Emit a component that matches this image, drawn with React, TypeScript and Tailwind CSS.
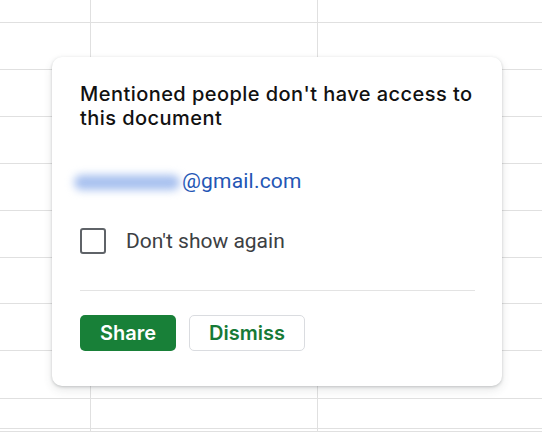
import React from "react";

const rowHeights = [23, 47, 47, 47, 47, 47, 46, 47, 48, 30, 3];

export default function App() {
  return (
    <div className="relative w-[542px] h-[432px] overflow-hidden bg-white" style={{ fontFamily: "Roboto, 'Liberation Sans', sans-serif" }}>
      {/* spreadsheet background */}
      <div className="flex flex-col">
        {rowHeights.map((h, i) => (
          <div key={i} className="flex border-b border-[#e0e0e0]" style={{ height: h }}>
            <div className="w-[91px] shrink-0 border-r border-[#e0e0e0]" />
            <div className="w-[227px] shrink-0 border-r border-[#e0e0e0]" />
            <div className="flex-1" />
          </div>
        ))}
      </div>

      {/* popup card */}
      <div className="absolute left-[52px] top-[57px] w-[450px] h-[329px] rounded-[10px] bg-white shadow-[0_1px_3px_rgba(60,64,67,0.25),0_4px_10px_rgba(60,64,67,0.12)] pl-[28px] pr-[27px] pt-[25px] flex flex-col">
        <div className="text-[20px] leading-[24px] font-medium text-[#111111] tracking-[0.45px]" style={{ fontFamily: "Inter, 'Open Sans', sans-serif" }}>
          Mentioned people don't have access to this document
        </div>
        <div className="mt-[40px] flex items-center h-[24px] text-[21px] tracking-[0.2px] text-[#2356b5]">
          <span className="inline-block w-[106px] h-[15px] -ml-[6px] mr-[2px] rounded-full bg-[#a7c0ef] blur-[4px]" />
          <span>@gmail.com</span>
        </div>
        <div className="mt-[34px] flex items-center h-[26px]">
          <div className="w-[26px] h-[26px] rounded-[3px] border-[2.5px] border-[#5f6368]" />
          <span className="ml-[20px] text-[21px] leading-[24px] text-[#3c4043]">Don't show again</span>
        </div>
        <div className="mt-[36px] h-px bg-[#e3e3e3]" />
        <div className="mt-[24px] flex gap-[13px]">
          <button className="w-[96px] h-[36px] rounded-[5px] bg-[#188038] text-white text-[20px] font-semibold" style={{ fontFamily: "Inter, 'Open Sans', sans-serif" }}>
            Share
          </button>
          <button className="w-[116px] h-[36px] rounded-[5px] border border-[#dadce0] bg-white text-[#167a36] text-[20px] font-semibold" style={{ fontFamily: "Inter, 'Open Sans', sans-serif" }}>
            Dismiss
          </button>
        </div>
      </div>
    </div>
  );
}
